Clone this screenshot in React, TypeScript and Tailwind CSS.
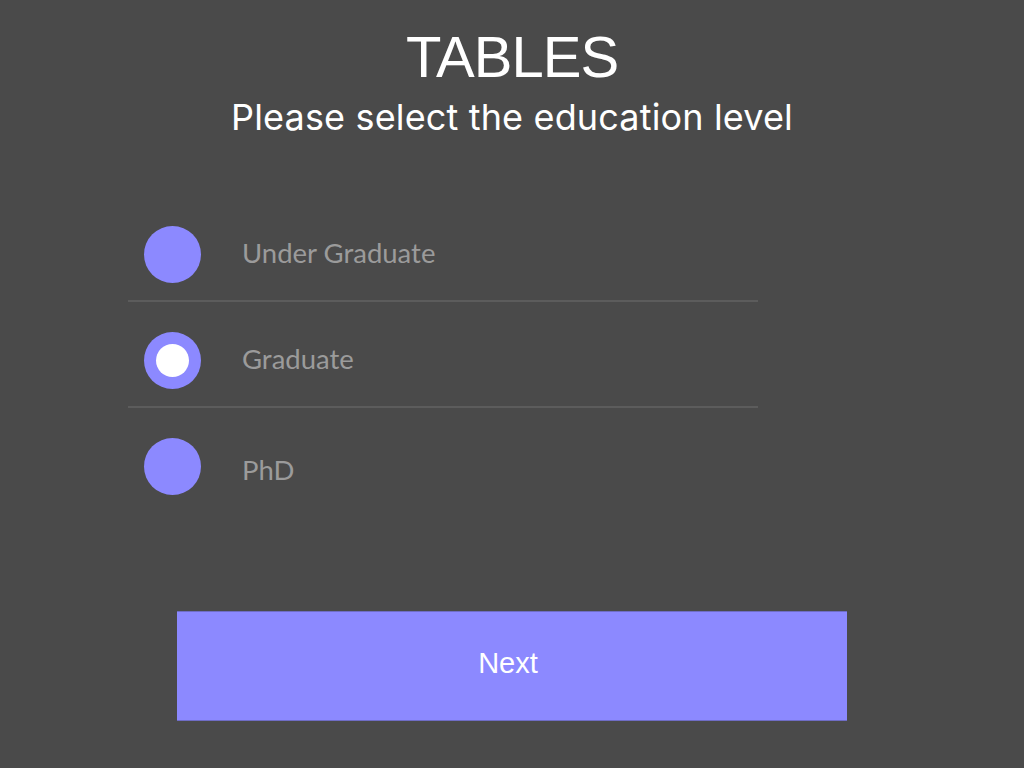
import React from "react";

const options = [
  { label: "Under Graduate", selected: false, extra: "" },
  { label: "Graduate", selected: true, extra: "" },
  { label: "PhD", selected: false, extra: "pt-[10px]" },
];

export default function App() {
  return (
    <div className="w-[1024px] h-[768px] bg-[#4a4a4a] flex flex-col overflow-hidden">
      <div className="flex flex-col items-center pt-[28px] text-white">
        <h1 className="text-[58px] leading-[58px] tracking-[-1px]" style={{ fontFamily: '"Liberation Sans", Arial, sans-serif' }}>TABLES</h1>
        <p className="mt-[13px] text-[36px] leading-[36px] tracking-[0.15px]" style={{ fontFamily: 'Inter, "Liberation Sans", sans-serif' }}>Please select the education level</p>
      </div>
      <div className="mt-[61px] ml-[128px] w-[630px] flex flex-col">
        {options.map((o, i) => (
          <div key={o.label} className="flex flex-col">
            <div className="h-[104px] flex items-start pt-[30px] pl-[16px]">
              <div className="w-[57px] h-[57px] rounded-full bg-[#8c89ff] flex items-center justify-center shrink-0">
                {o.selected && <div className="w-[33px] h-[33px] rounded-full bg-white" />}
              </div>
              <div className={`ml-[41px] h-[57px] flex items-center pb-[4px] text-[27.5px] text-[#9b9b9b] ${o.extra}`} style={{ fontFamily: 'Lato, "Noto Sans", sans-serif' }}>
                {o.label}
              </div>
            </div>
            {i < options.length - 1 && <div className="h-[2px] bg-[#5c5c5c]" />}
          </div>
        ))}
      </div>
      <div className="mt-[99px] flex justify-center">
        <button className="w-[670px] h-[110px] bg-[#8c89ff] border-y border-[#6f6dc6] text-white text-[29px] flex items-center justify-center pr-[8px] pb-[4px]" style={{ fontFamily: '"Liberation Sans", Arial, sans-serif' }}>
          Next
        </button>
      </div>
    </div>
  );
}
